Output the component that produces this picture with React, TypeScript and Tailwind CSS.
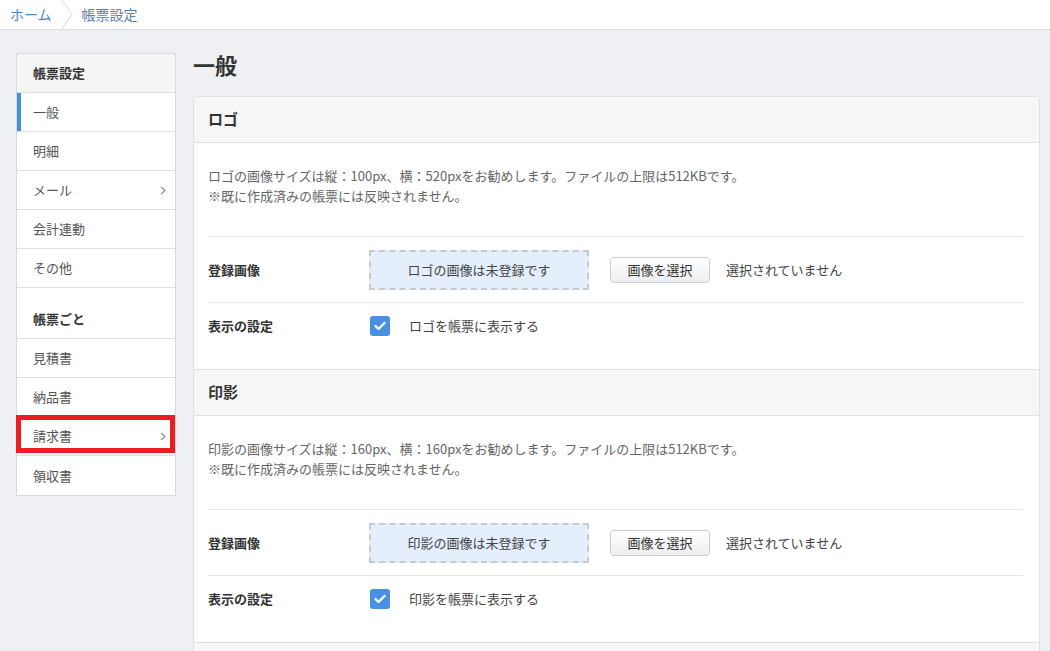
import React from "react";

const font = { fontFamily: '"Noto Sans CJK JP", "Noto Sans", "Liberation Sans", sans-serif' };

function Chevron() {
  return (
    <svg width="6" height="9" viewBox="0 0 6 9" className="shrink-0">
      <polyline points="1,1 5,4.5 1,8" fill="none" stroke="#8a8d92" strokeWidth="1.2" />
    </svg>
  );
}

function NavItem({ label, active, chevron, last, highlight }: { label: string; active?: boolean; chevron?: boolean; last?: boolean; highlight?: boolean }) {
  return (
    <div
      className={
        "relative flex h-[39px] items-center justify-between pl-[16px] pr-[9px] text-[13px] text-[#555] " +
        (last ? "" : "border-b border-[#dcdfe4] ") +
        (active ? "shadow-[inset_4px_0_0_#4a90e2] text-[#333]" : "")
      }
    >
      <span>{label}</span>
      {chevron && <Chevron />}
      {highlight && (
        <div className="pointer-events-none absolute left-[-1px] right-[0px] top-[-2px] h-[38px] border-[5px] border-[#ed1c24]" />
      )}
    </div>
  );
}

function CheckBox() {
  return (
    <div className="flex h-[20px] w-[20px] items-center justify-center rounded-[3px] bg-[#4a90e2]">
      <svg width="12" height="10" viewBox="0 0 12 10">
        <polyline points="1.5,5 4.5,8 10.5,2" fill="none" stroke="#fff" strokeWidth="2.4" strokeLinecap="round" strokeLinejoin="round" />
      </svg>
    </div>
  );
}

function Section({ title, desc, placeholder, checkLabel }: { title: string; desc: string; placeholder: string; checkLabel: string }) {
  return (
    <div>
      <div className="flex h-[46px] items-center border-b border-[#dcdfe3] bg-[#f6f6f6] px-[14px] text-[15px] font-bold text-[#333]">
        {title}
      </div>
      <div className="pl-[14px] pr-[16px] pb-[21px]">
        <div className="pt-[23px] pb-[30px] text-[13px] leading-[20px] text-[#666]">
          <div>{desc}</div>
          <div>※既に作成済みの帳票には反映されません。</div>
        </div>
        <div className="flex h-[66px] items-center border-t border-[#e4e6ea]">
          <div className="w-[161px] shrink-0 text-[13px] font-bold text-[#333]">登録画像</div>
          <div className="flex h-[40px] w-[220px] items-center justify-center border-2 border-dashed border-[#c6c9ce] bg-[#e5effb] text-[13px] text-[#444]">
            {placeholder}
          </div>
          <button className="ml-[21px] h-[26px] w-[100px] rounded-[4px] border border-[#c9ccd1] bg-gradient-to-b from-white to-[#eceef1] text-[13px] text-[#333]">
            画像を選択
          </button>
          <span className="ml-[16px] text-[13px] text-[#444]">選択されていません</span>
        </div>
        <div className="flex h-[46px] items-center border-t border-[#e4e6ea]">
          <div className="w-[162px] shrink-0 text-[13px] font-bold text-[#333]">表示の設定</div>
          <CheckBox />
          <span className="ml-[19px] text-[13px] text-[#444]">{checkLabel}</span>
        </div>
      </div>
    </div>
  );
}

export default function App() {
  return (
    <div className="min-h-screen bg-[#eff0f3]" style={font}>
      <div className="flex h-[30px] items-center border-b border-[#d9dce1] bg-white">
        <span className="pl-[10px] text-[14px] text-[#4a86c8]">ホーム</span>
        <svg width="14" height="29" viewBox="0 0 14 29" className="ml-[9px] mr-[7px] self-start">
          <polyline points="1,0 11,14.5 1,29" fill="none" stroke="#d5d8dd" strokeWidth="1" />
        </svg>
        <span className="text-[14px] text-[#5a7fae]">帳票設定</span>
      </div>
      <div className="flex gap-[17px] pl-[16px] pr-[10px] pt-[19px]">
        <aside className="mt-[4px] w-[160px] shrink-0 self-start border border-[#d6d9de] bg-white">
          <div className="flex h-[39px] items-center border-b border-[#dcdfe4] bg-[#f5f5f5] pl-[16px] text-[13px] font-bold text-[#333]">
            帳票設定
          </div>
          <NavItem label="一般" active />
          <NavItem label="明細" />
          <NavItem label="メール" chevron />
          <NavItem label="会計連動" />
          <NavItem label="その他" />
          <div className="flex h-[51px] items-end border-b border-[#dcdfe4] pb-[10px] pl-[16px] text-[13px] font-bold text-[#333]">
            帳票ごと
          </div>
          <NavItem label="見積書" />
          <NavItem label="納品書" />
          <NavItem label="請求書" chevron highlight />
          <NavItem label="領収書" last />
        </aside>
        <main className="min-w-0 flex-1">
          <h1 className="mb-[17px] h-[30px] text-[22px] font-bold leading-[30px] text-[#333]">一般</h1>
          <div className="overflow-hidden rounded-[4px] border border-[#dcdfe3] bg-white">
            <Section
              title="ロゴ"
              desc="ロゴの画像サイズは縦：100px、横：520pxをお勧めします。ファイルの上限は512KBです。"
              placeholder="ロゴの画像は未登録です"
              checkLabel="ロゴを帳票に表示する"
            />
            <div className="border-t border-[#dcdfe3]">
              <Section
                title="印影"
                desc="印影の画像サイズは縦：160px、横：160pxをお勧めします。ファイルの上限は512KBです。"
                placeholder="印影の画像は未登録です"
                checkLabel="印影を帳票に表示する"
              />
            </div>
            <div className="h-[46px] border-t border-[#dcdfe3] bg-[#f6f6f6]" />
          </div>
        </main>
      </div>
    </div>
  );
}
